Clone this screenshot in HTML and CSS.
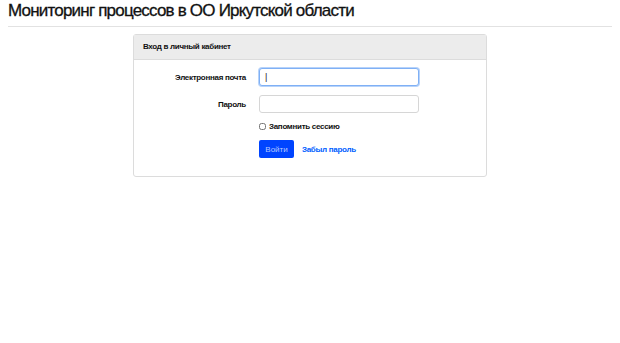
FILE: index.html
```html
<!DOCTYPE html>
<html lang="ru">

<head>
    <meta charset="UTF-8">
    <meta name="viewport" content="width=device-width, initial-scale=1.0">
    <title>Мониторинг процессов в ОО Иркутской области</title>
    <link rel="stylesheet" href="styles.css">
</head>

<body>
    <h1 class="title">Мониторинг процессов в ОО Иркутской области</h1>
    <hr class="divider">
    <div class="card">
        <div class="card-header">Вход в личный кабинет</div>
        <form class="card-body">
            <div class="row">
                <label class="label" for="email">Электронная почта</label>
                <input class="field focused" id="email" type="email" value="|">
            </div>
            <div class="row">
                <label class="label" for="password">Пароль</label>
                <input class="field" id="password" type="password">
            </div>
            <div class="row check-row">
                <span></span>
                <label class="check"><input type="checkbox"> Запомнить сессию</label>
            </div>
            <div class="row actions">
                <span></span>
                <div class="buttons">
                    <button class="btn" type="button">Войти</button>
                    <a class="link" href="#">Забыл пароль</a>
                </div>
            </div>
        </form>
    </div>
</body>

</html>
```

FILE: styles.css
```css
body {
    margin: 0;
    padding: 0 8px;
    font-family: "Liberation Sans", Arial, sans-serif;
    color: #111;
    background: #fff;
}

.title {
    margin: 0;
    padding-top: 1px;
    font-size: 17px;
    font-weight: normal;
    line-height: 19px;
    letter-spacing: -0.8px;
    -webkit-text-stroke: 0.3px #111;
}

.divider {
    margin: 6px 0 7px;
    border: none;
    border-top: 1px solid #e2e2e2;
}

.card {
    width: 352px;
    margin-left: 125px;
    border: 1px solid #dcdcdc;
    border-radius: 3px;
}

.card-header {
    height: 24px;
    line-height: 24px;
    padding: 0 9px;
    background: #ececec;
    border-bottom: 1px solid #dcdcdc;
    font-size: 8px;
    font-weight: bold;
    letter-spacing: -0.3px;
}

.card-body {
    display: flex;
    flex-direction: column;
    gap: 9px;
    padding: 8px 10px 18px;
    margin: 0;
}

.row {
    display: grid;
    grid-template-columns: 102px 160px;
    column-gap: 13px;
    align-items: center;
}

.label {
    text-align: right;
    font-size: 8px;
    font-weight: bold;
    letter-spacing: -0.3px;
}

.field {
    box-sizing: border-box;
    width: 160px;
    height: 18px;
    margin: 0;
    padding: 0 5px;
    border: 1px solid #d6d6d6;
    border-radius: 3px;
    color: #222;
    font-size: 9px;
    font-family: inherit;
    outline: none;
}

.field.focused {
    border-color: #7fb0f5;
    box-shadow: 0 0 0 1px #b7d3fa;
}

.check-row {
    height: 8px;
}

.check {
    display: flex;
    align-items: center;
    gap: 3px;
    height: 8px;
    font-size: 8px;
    font-weight: bold;
    letter-spacing: -0.3px;
}

.check input {
    width: 7px;
    height: 7px;
    margin: 0;
}

.actions {
    margin-top: 1px;
}

.buttons {
    display: flex;
    align-items: center;
    gap: 8px;
}

.btn {
    height: 18px;
    width: 35px;
    padding: 0;
    background: #0044ff;
    color: #b4c8ff;
    border: none;
    border-radius: 2px;
    font-size: 8px;
    font-family: inherit;
    cursor: pointer;
}

.link {
    color: #0060ff;
    font-size: 8px;
    font-weight: bold;
    letter-spacing: -0.3px;
    text-decoration: none;
}
```
